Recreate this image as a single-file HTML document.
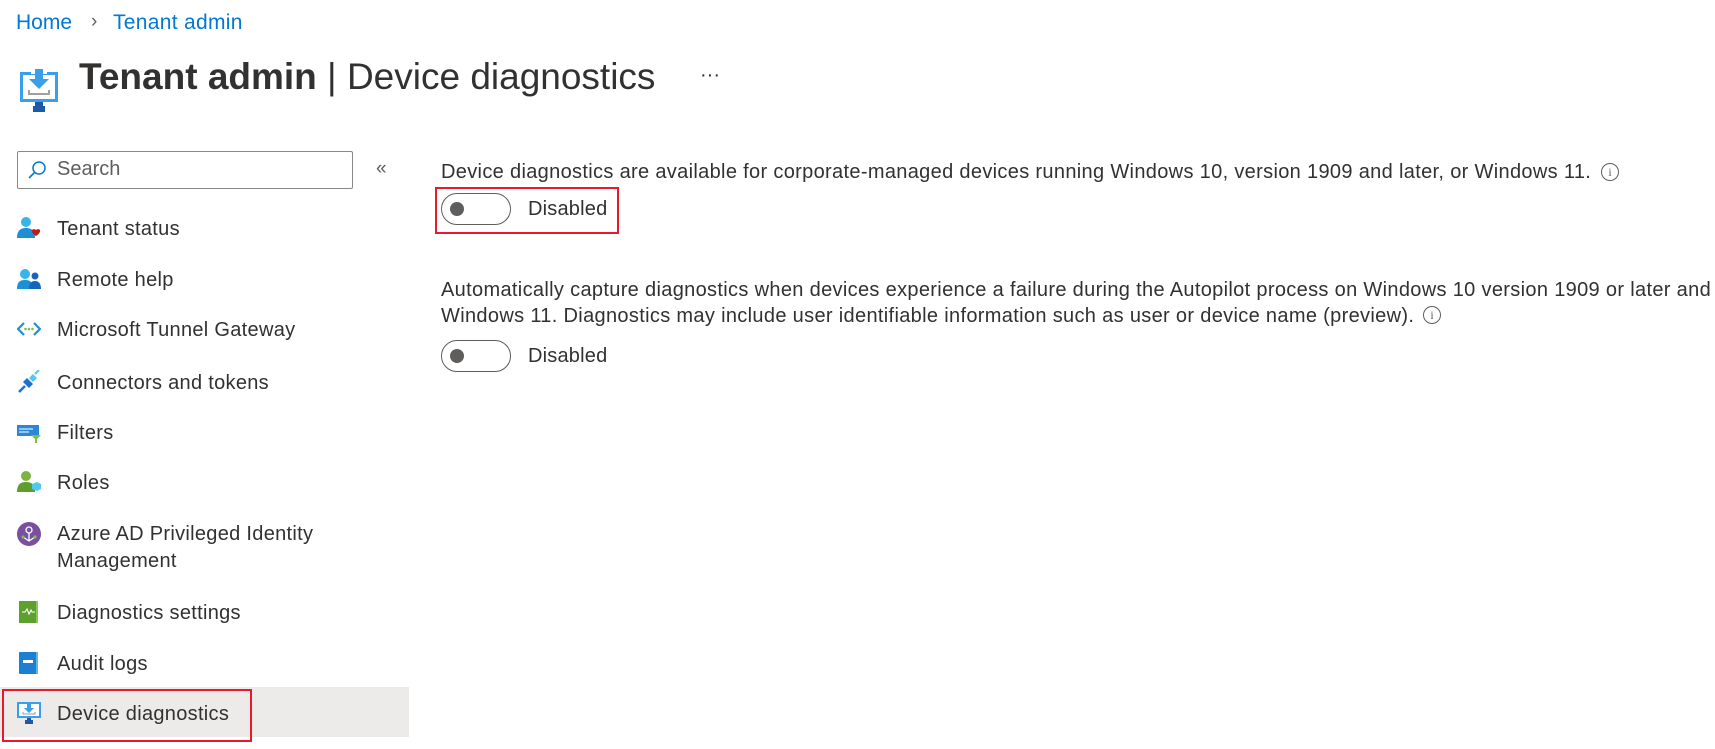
<!DOCTYPE html>
<html><head><meta charset="utf-8"><style>
*{margin:0;padding:0;box-sizing:border-box}
body{width:1715px;height:749px;background:#fff;font-family:"Liberation Sans",sans-serif;color:#323130;position:relative;overflow:hidden}
.a{position:absolute;white-space:nowrap}
.nav{font-size:20px;line-height:26px;left:57px;letter-spacing:0.3px}
.ic{position:absolute;left:17px;width:24px;height:24px}
.p{font-size:20px;left:441px;line-height:26px;letter-spacing:0.33px}
.tg{position:absolute;width:70px;height:32px;border:1px solid #605e5c;border-radius:16px}
.tg:after{content:"";position:absolute;left:8px;top:8px;width:14px;height:14px;border-radius:50%;background:#605e5c}
.info{position:absolute;width:18px;height:18px;border:1.3px solid #605e5c;border-radius:50%;font-size:12px;text-align:center;line-height:16px;color:#605e5c;font-family:"Liberation Serif",serif}
</style></head><body>
<div class="a" style="left:16px;top:11px;font-size:21px;color:#0078d4">Home</div>
<div class="a" style="left:91px;top:11px;font-size:19px;color:#605e5c">&#x203A;</div>
<div class="a" style="left:113px;top:11px;font-size:21px;color:#0078d4;letter-spacing:0.3px">Tenant admin</div>

<svg class="a" style="left:19px;top:66px" width="40" height="46" viewBox="0 0 40 46">
<rect x="1" y="6" width="38" height="30" fill="#3a9ee8"/><rect x="4" y="9" width="32" height="24" fill="#fff"/>
<rect x="12" y="2" width="16" height="6" fill="#fff"/>
<path d="M16 3h8v10h6l-10 10-10-10h6z" fill="#3a9ee8"/>
<path d="M10 24v4h20v-4" stroke="#a0a0a0" stroke-width="2" fill="none"/>
<path d="M14 40h12v6H14z" fill="#1b5aa8"/><rect x="16" y="36" width="8" height="5" fill="#1b5aa8"/>
</svg>
<div class="a" style="left:79px;top:55px;font-size:37px;line-height:44px;color:#323130"><b style="font-weight:600">Tenant admin</b> | Device diagnostics</div>
<div class="a" style="left:700px;top:64px;font-size:20px">&middot;&middot;&middot;</div>

<div class="a" style="left:17px;top:151px;width:336px;height:38px;border:1px solid #8a8886;border-radius:2px"></div>
<svg class="a" style="left:27px;top:160px" width="20" height="20" viewBox="0 0 20 20"><circle cx="12" cy="8" r="6" stroke="#0078d4" stroke-width="1.5" fill="none"/><path d="M8 12L2 18" stroke="#0078d4" stroke-width="1.6"/></svg>
<div class="a" style="left:57px;top:158px;font-size:20px;color:#605e5c">Search</div>
<div class="a" style="left:376px;top:158px;font-size:19px;color:#605e5c">&laquo;</div>

<svg class="ic" style="top:216px" viewBox="0 0 24 24"><circle cx="9" cy="6" r="5" fill="#39b4e8"/><path d="M0 22c0-8 4-10 9-10s9 2 9 10z" fill="#1d8fd4"/><path d="M15 14c2-2 4 0 4 0s2-2 4 0c1 3-4 6-4 6s-5-3-4-6z" fill="#c21a1a"/></svg>
<div class="a nav" style="top:216px">Tenant status</div>
<svg class="ic" style="top:267px" viewBox="0 0 24 24"><circle cx="8" cy="7" r="5" fill="#39b4e8"/><path d="M0 22c0-7 3-9 8-9s8 2 8 9z" fill="#1d8fd4"/><circle cx="18" cy="9" r="3.5" fill="#1565c0"/><path d="M12 22c0-5 2-8 6-8s6 3 6 8z" fill="#1565c0"/></svg>
<div class="a nav" style="top:267px">Remote help</div>
<svg class="ic" style="top:317px" viewBox="0 0 24 24"><path d="M7 6L1 12l6 6M17 6l6 6-6 6" stroke="#1d8fd4" stroke-width="2.2" fill="none"/><circle cx="8.5" cy="12" r="1.3" fill="#7cc242"/><circle cx="12" cy="12" r="1.3" fill="#7cc242"/><circle cx="15.5" cy="12" r="1.3" fill="#7cc242"/></svg>
<div class="a nav" style="top:317px">Microsoft Tunnel Gateway</div>
<svg class="ic" style="top:370px" viewBox="0 0 24 24"><path d="M2 22l6-6" stroke="#1d6fd4" stroke-width="2.5"/><path d="M6 12l6 6 4-4-6-6z" fill="#1d6fd4"/><path d="M12 8l4 4 4-4-4-4z" fill="#50c8f0"/><path d="M18 4l4-4" stroke="#50c8f0" stroke-width="2"/></svg>
<div class="a nav" style="top:370px">Connectors and tokens</div>
<svg class="ic" style="top:420px" viewBox="0 0 24 24"><rect x="0" y="5" width="22" height="11" fill="#2b88d8"/><path d="M2 9h14M2 12h10" stroke="#fff" stroke-width="1"/><path d="M14 15h10l-4 4v4h-2v-4z" fill="#7cc242"/></svg>
<div class="a nav" style="top:420px">Filters</div>
<svg class="ic" style="top:470px" viewBox="0 0 24 24"><circle cx="9" cy="6" r="5" fill="#7cb342"/><path d="M0 22c0-8 4-10 9-10s9 2 9 10z" fill="#5e9e2d"/><path d="M15 14l5-2 4 2v5l-4 2-5-2z" fill="#50c8f0"/></svg>
<div class="a nav" style="top:470px">Roles</div>
<svg class="ic" style="top:522px" viewBox="0 0 24 24"><circle cx="12" cy="12" r="12" fill="#7b4fa0"/><circle cx="12" cy="8" r="3" stroke="#fff" stroke-width="1.3" fill="none"/><path d="M12 11v8M6 15l6 4 6-4" stroke="#fff" stroke-width="1.3" fill="none"/><circle cx="6" cy="15" r="1.6" fill="#7cc242"/><circle cx="18" cy="15" r="1.6" fill="#7cc242"/></svg>
<div class="a nav" style="top:521px">Azure AD Privileged Identity</div>
<div class="a nav" style="top:548px">Management</div>
<svg class="ic" style="top:600px" viewBox="0 0 24 24"><rect x="2" y="1" width="19" height="22" fill="#5ea02e"/><rect x="19" y="1" width="2" height="22" fill="#8cc653"/><path d="M5 12h3l2-3 2 5 2-4 1 2h3" stroke="#fff" stroke-width="1.1" fill="none"/></svg>
<div class="a nav" style="top:600px">Diagnostics settings</div>
<svg class="ic" style="top:651px" viewBox="0 0 24 24"><rect x="2" y="1" width="19" height="22" rx="1" fill="#1b7fd4"/><rect x="19" y="1" width="2" height="22" fill="#60b4ee"/><rect x="6" y="9" width="10" height="3" fill="#fff"/></svg>
<div class="a nav" style="top:651px">Audit logs</div>

<div class="a" style="left:0;top:687px;width:409px;height:50px;background:#edebe9"></div>
<div class="a" style="left:2px;top:689px;width:250px;height:53px;border:2px solid #e8192c"></div>
<svg class="ic" style="top:700px" viewBox="0 0 24 24"><rect x="0" y="2" width="24" height="16" fill="#3a9ee8"/><rect x="2" y="4" width="20" height="12" fill="#fff"/><path d="M10 3h4v5h3l-5 5-5-5h3z" fill="#3a9ee8"/><path d="M6 12v2h12v-2" stroke="#999" fill="none"/><rect x="8" y="20" width="8" height="4" fill="#1b5aa8"/><rect x="10" y="18" width="4" height="3" fill="#1b5aa8"/></svg>
<div class="a nav" style="top:701px">Device diagnostics</div>

<div class="a p" style="top:159px">Device diagnostics are available for corporate-managed devices running Windows 10, version 1909 and later, or Windows 11.</div>
<div class="info" style="left:1601px;top:163px">i</div>
<div class="a" style="left:435px;top:187px;width:184px;height:47px;border:2px solid #e8192c"></div>
<div class="tg" style="left:441px;top:193px"></div>
<div class="a" style="left:528px;top:198px;font-size:20px;letter-spacing:0.2px">Disabled</div>

<div class="a p" style="top:277px">Automatically capture diagnostics when devices experience a failure during the Autopilot process on Windows 10 version 1909 or later and</div>
<div class="a p" style="top:303px">Windows 11. Diagnostics may include user identifiable information such as user or device name (preview).</div>
<div class="info" style="left:1423px;top:306px">i</div>
<div class="tg" style="left:441px;top:340px"></div>
<div class="a" style="left:528px;top:345px;font-size:20px;letter-spacing:0.2px">Disabled</div>
</body></html>
